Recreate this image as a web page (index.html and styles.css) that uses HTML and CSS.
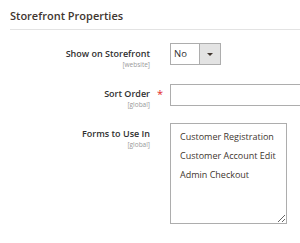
FILE: index.html
```html
<!DOCTYPE html>
<html lang="en">

<head>
    <meta charset="UTF-8">
    <meta name="viewport" content="width=device-width, initial-scale=1.0">
    <title>Storefront Properties</title>
    <link rel="stylesheet" href="styles.css">
</head>

<body>
    <fieldset class="fieldset">
        <legend class="fieldset-title">Storefront Properties</legend>

        <div class="field">
            <div class="field-label">
                <label for="is_visible">Show on Storefront</label>
                <span class="scope">[website]</span>
            </div>
            <span class="required"></span>
            <div class="control">
                <div class="select">
                    <span class="select-value" id="is_visible">No</span>
                    <span class="select-button"><span class="arrow"></span></span>
                </div>
            </div>
        </div>

        <div class="field">
            <div class="field-label">
                <label for="sort_order">Sort Order</label>
                <span class="scope">[global]</span>
            </div>
            <span class="required">*</span>
            <div class="control">
                <input type="text" id="sort_order" class="input-text">
            </div>
        </div>

        <div class="field">
            <div class="field-label">
                <label for="used_in_forms">Forms to Use In</label>
                <span class="scope">[global]</span>
            </div>
            <span class="required"></span>
            <div class="control">
                <div class="multiselect" id="used_in_forms">
                    <div class="option">Customer Registration</div>
                    <div class="option">Customer Account Edit</div>
                    <div class="option">Admin Checkout</div>
                </div>
            </div>
        </div>
    </fieldset>
</body>

</html>
```

FILE: styles.css
```css
/* General Reset */
* {
    margin: 0;
    padding: 0;
    box-sizing: border-box;
    font-family: 'Open Sans', sans-serif;
}

body {
    background: #fff;
    width: 300px;
    height: 243px;
    overflow: hidden;
}

.fieldset {
    border: none;
    padding-left: 10px;
}

.fieldset-title {
    display: block;
    width: 100%;
    padding: 9px 0 6px;
    font-size: 11px;
    font-weight: 600;
    color: #41362f;
    line-height: 14px;
    border-bottom: 1px solid #e3e3e3;
    margin-bottom: 13px;
}

.field {
    display: grid;
    grid-template-columns: 140px 20px 1fr;
    margin-bottom: 13px;
}

.field:last-child {
    margin-top: 1px;
}

.field-label {
    display: flex;
    flex-direction: column;
    align-items: flex-end;
    padding-top: 5px;
}

.field-label label {
    font-size: 9px;
    font-weight: 600;
    color: #303030;
    line-height: 12px;
}

.scope {
    font-size: 6.5px;
    color: #999;
    line-height: 10px;
}

.required {
    color: #e22626;
    font-size: 11px;
    text-align: center;
    padding-top: 6px;
    line-height: 10px;
}

.select {
    display: flex;
    width: 51px;
    height: 22px;
    border: 1px solid #adadad;
    background: #fff;
}

.select-value {
    flex: 1;
    font-size: 9.5px;
    color: #303030;
    line-height: 20px;
    padding-left: 3px;
}

.select-button {
    width: 21px;
    background: #e3e3e3;
    border-left: 1px solid #adadad;
    display: flex;
    justify-content: center;
    align-items: center;
}

.arrow {
    width: 0;
    height: 0;
    border-left: 3px solid transparent;
    border-right: 3px solid transparent;
    border-top: 3px solid #41362f;
}

.input-text {
    width: 140px;
    height: 22px;
    border: 1px solid #adadad;
    background: #fff;
}

.multiselect {
    width: 117px;
    height: 101px;
    border: 1px solid #adadad;
    padding: 3px 9px;
    overflow: hidden;
    resize: both;
}

.option {
    font-size: 9px;
    color: #41362f;
    line-height: 19px;
    white-space: nowrap;
}
```
